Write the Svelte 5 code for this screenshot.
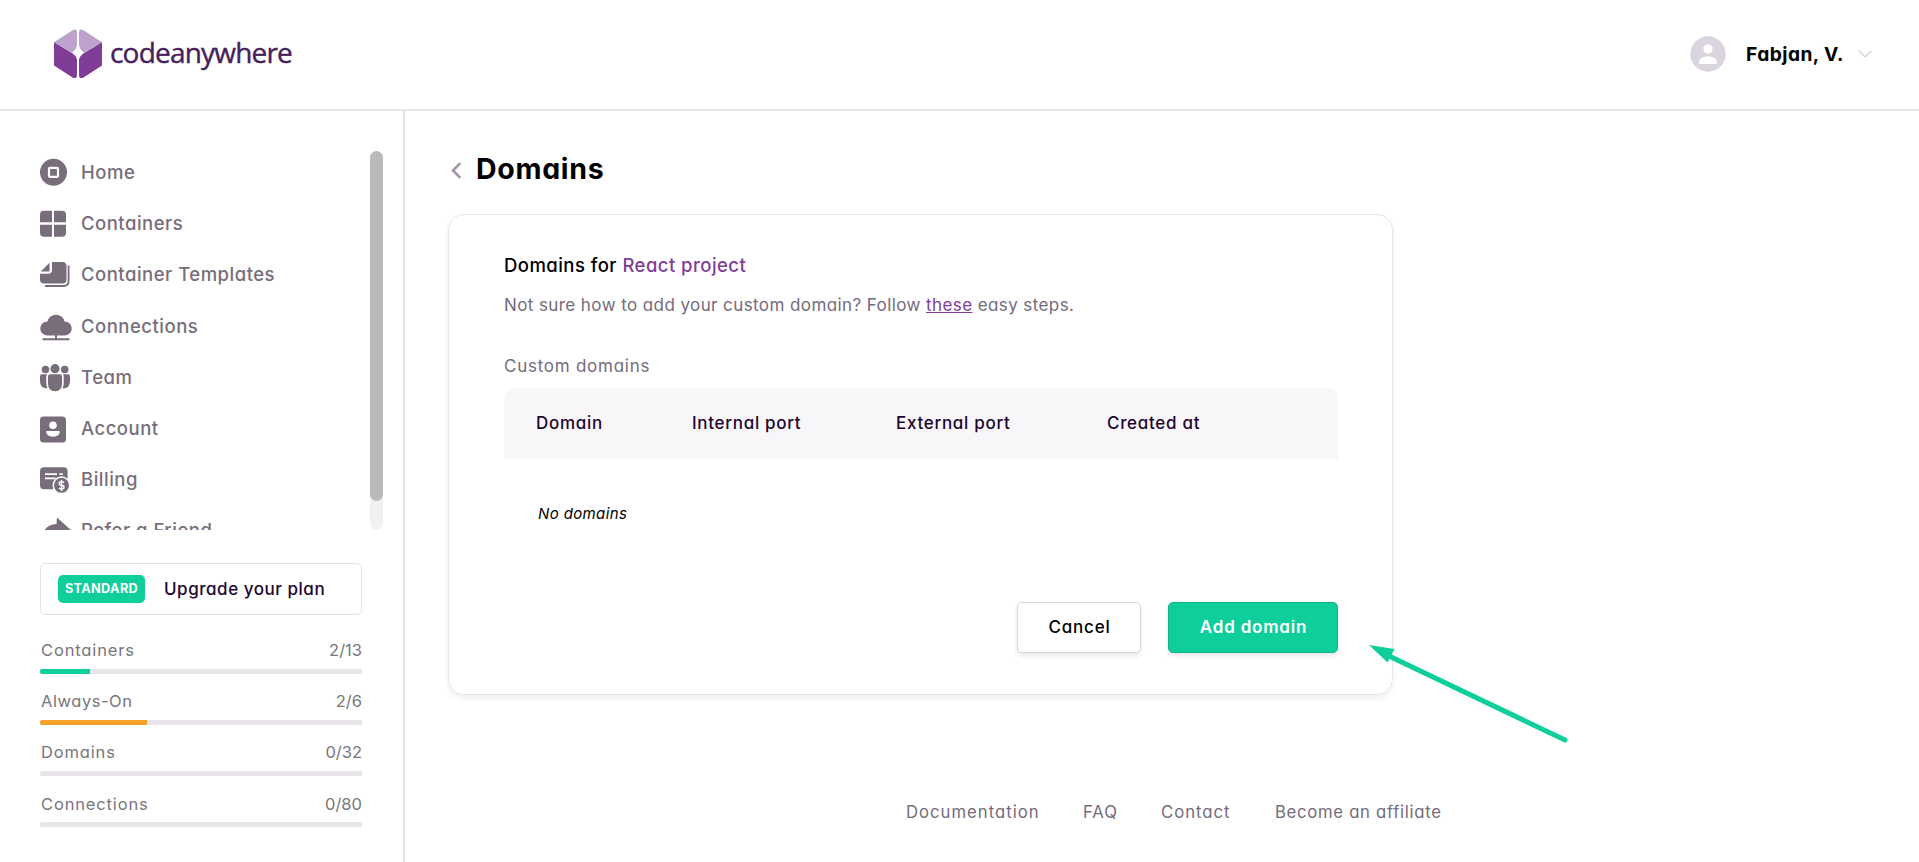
<script>
  const nav = [
    { id: 'home', label: 'Home' },
    { id: 'containers', label: 'Containers' },
    { id: 'templates', label: 'Container Templates' },
    { id: 'connections', label: 'Connections' },
    { id: 'team', label: 'Team' },
    { id: 'account', label: 'Account' },
    { id: 'billing', label: 'Billing' },
    { id: 'refer', label: 'Refer a Friend' }
  ];
  const usage = [
    { label: 'Containers', used: 2, total: 13 },
    { label: 'Always-On', used: 2, total: 6, warn: true },
    { label: 'Domains', used: 0, total: 32 },
    { label: 'Connections', used: 0, total: 80 }
  ];
  const links = ['Documentation', 'FAQ', 'Contact', 'Become an affiliate'];
</script>

<div class="page">
  <header>
    <a class="logo" href="#home" aria-label="codeanywhere">
      <svg width="48" height="50" viewBox="0 0 48 50">
        <path fill="#bca2cd" d="M0 13.2 18.5 1.2Q23 -1 23 4V15Q23 20 18 23.500Z" />
        <path fill="#bca2cd" d="M48 13.200 29.500 1.200Q25 -1 25 4V15Q25 20 30 23.500Z" />
        <path fill="#803d98" d="M0 13.200 18 24Q23 27 23 32V46Q23 50.500 18.500 48.500L0 36.500Z" />
        <path fill="#803d98" d="M48 13.200 30 24Q25 27 25 32V46Q25 50.500 29.500 48.500L48 36.500Z" />
      </svg>
      <span>codeanywhere</span>
    </a>
    <div class="user">
      <svg width="36" height="36" viewBox="0 0 36 36">
        <circle cx="18" cy="18" r="17.700" fill="#d9d4dd" />
        <circle cx="18" cy="13" r="4.600" fill="#fff" />
        <path fill="#fff" d="M9.300 28V25.500C9.300 22 14 20.600 18 20.600S26.700 22 26.700 25.500V28Z" />
      </svg>
      <span class="name">Fabjan, V.</span>
      <svg width="14" height="8" viewBox="0 0 14 8"><path d="M.7.700 7 6.800 13.300.700" fill="none" stroke="#d5d1d8" stroke-width="1.200" /></svg>
    </div>
  </header>

  <div class="body">
    <aside>
      <div class="scroller">
        <nav>
          {#each nav as item}
            <a href="#{item.id}">
              <svg width="41" height="43.200" viewBox="0 0 41 43.200" fill="#776d7b">
                {#if item.id === 'home'}
                  <circle cx="13.500" cy="21.300" r="13.500" />
                  <rect x="9" y="16.800" width="9" height="9" rx="1" fill="none" stroke="#fff" stroke-width="2.200" />
                {:else if item.id === 'containers'}
                  <path d="M4 8.800H12V20.300H0V12.800Q0 8.800 4 8.800ZM14 8.800H22Q26 8.800 26 12.800V20.300H14ZM0 22.800H12V34.800H4Q0 34.800 0 30.800ZM14 22.800H26V30.800Q26 34.800 22 34.800H14Z" />
                {:else if item.id === 'templates'}
                  <path d="M12 9H22.500Q26.500 9 26.500 13V26.500Q26.500 30.500 22.500 30.500H4Q0 30.500 0 26.500V20.800H8Q12 20.800 12 17Z" />
                  <path d="M9.500 9.800V18.500H.8Z" />
                  <path d="M28.600 12.500V28Q28.600 33 23.500 33H5" fill="none" stroke="#776d7b" stroke-width="1.800" />
                {:else if item.id === 'connections'}
                  <path d="M7 30.500A7 7 0 0 1 7.500 16.500A8.700 8.700 0 0 1 24.500 16.500A7 7 0 0 1 25 30.500Z" />
                  <path d="M15 30H17V33.200H29.500V35.200H2.500V33.200H15Z" />
                {:else if item.id === 'team'}
                  <circle cx="15" cy="12.700" r="4.600" />
                  <circle cx="5.500" cy="13.500" r="3.800" />
                  <circle cx="24.700" cy="13.500" r="3.800" />
                  <path d="M10 18.300H20Q22 18.300 22 20.300V27Q22 35.200 15 35.200T8 27V20.300Q8 18.300 10 18.300ZM2 18.300H7Q6.300 19 6.300 20.500V27Q6.300 30 7.500 32.600Q0 32.600 0 25V20.300Q0 18.300 2 18.300ZM28 18.300H23Q23.700 19 23.700 20.500V27Q23.700 30 22.500 32.600Q30 32.600 30 25V20.300Q30 18.300 28 18.300Z" />
                {:else if item.id === 'account'}
                  <rect y="9.500" width="26" height="26" rx="3.600" />
                  <circle cx="13" cy="18.200" r="3.800" fill="#fff" />
                  <path fill="#fff" d="M7 24H19Q20.400 24 19.600 26Q18 29.800 13 29.800T6.400 26Q5.600 24 7 24Z" />
                {:else if item.id === 'billing'}
                  <rect y="9.200" width="27.600" height="22" rx="4" />
                  <path d="M5 16.200H17M19.500 16.200H22.800M5 20.400H15.500" stroke="#fff" stroke-width="1.800" />
                  <circle cx="21.500" cy="27.300" r="8.300" stroke="#fff" stroke-width="1.500" />
                  <path d="M24 24.700Q23.300 23.800 21.500 23.800Q19.200 23.800 19.200 25.500Q19.200 27 21.500 27.300Q24 27.600 24 29.200Q24 31 21.500 31Q19.600 31 18.900 29.900M21.500 22V33" fill="none" stroke="#fff" stroke-width="1.400" />
                {:else}
                  <path d="M17 8.600 32 22 17 33V26Q6 25 1 33Q2 16 16.500 15Z" />
                {/if}
              </svg>
              <span>{item.label}</span>
            </a>
          {/each}
        </nav>
        <div class="track"><div class="thumb"></div></div>
      </div>

      <a class="plan" href="#plan"><b>STANDARD</b><span>Upgrade your plan</span></a>

      <div class="usage">
        {#each usage as u}
          <div class="quota">
            <div class="line"><span class="what" class:tight={u.warn}>{u.label}</span><span>{u.used}/{u.total}</span></div>
            <div class="bar"><div class:warn={u.warn} style:width="{(u.used / u.total) * 100}%"></div></div>
          </div>
        {/each}
      </div>
    </aside>

    <main>
      <div class="title">
        <svg width="11" height="17" viewBox="0 0 11 17"><path d="M9.300 1.200 2 8.500 9.300 15.800" fill="none" stroke="#a596a9" stroke-width="2.600" /></svg>
        <h1>Domains</h1>
      </div>

      <section class="card">
        <h2>Domains for <span>React project</span></h2>
        <p class="hint">Not sure how to add your custom domain? Follow <a href="#steps">these</a> easy steps.</p>
        <p class="caption">Custom domains</p>
        <div class="thead">
          <span>Domain</span><span>Internal port</span><span>External port</span><span>Created at</span>
        </div>
        <div class="empty">No domains</div>
        <div class="actions">
          <button class="cancel">Cancel</button>
          <button class="add">Add domain</button>
        </div>
        <svg class="arrow" width="200" height="100" viewBox="0 0 200 100">
          <path d="M21 11.500 196 95" stroke="#0ecf9b" stroke-width="5" stroke-linecap="round" />
          <path d="M0 0 25.500 4 18.500 17.500Z" fill="#0ecf9b" />
        </svg>
      </section>

      <footer>
        {#each links as l}<a href="#{l}">{l}</a>{/each}
      </footer>
    </main>
  </div>
</div>

<style>
  :global(body) { background: #fff; overflow: hidden; }
  .page {
    height: 862px;
    display: flex;
    flex-direction: column;
    font-family: Inter, "Liberation Sans", sans-serif;
    font-feature-settings: "cv11" 1;
    color: #000;
  }
  .page :global(*) { box-sizing: border-box; }
  a { text-decoration: none; color: inherit; }
  h1, h2, p { margin: 0; }
  svg { display: block; flex: none; }

  header {
    height: 111px;
    flex: none;
    border-bottom: 2px solid #e8e4eb;
    display: flex;
    justify-content: space-between;
    padding: 0 47px 0 54px;
  }
  .logo { display: flex; gap: 8px; padding-top: 29px; }
  .logo span {
    font: 500 28px/48px "Open Sans", sans-serif;
    letter-spacing: -.8px;
    color: #46215c;
    -webkit-text-stroke: .4px #46215c;
    margin-top: -1.500px;
  }
  .user { display: flex; align-items: center; height: 108px; }
  .name { font-size: 19.200px; font-weight: 650; letter-spacing: .450px; width: 112px; margin-left: 20px; white-space: nowrap; }

  .body { flex: 1; display: flex; min-height: 0; }
  aside { width: 405px; border-right: 2px solid #e8e4eb; padding: 40px 20px 0 40px; flex: none; }
  .scroller { height: 379px; display: flex; justify-content: space-between; overflow: hidden; }
  nav { display: flex; flex-direction: column; gap: 8px; }
  nav a {
    display: flex;
    height: 43.200px;
    flex: none;
    align-items: center;
    color: #776d7b;
    font-size: 18.500px;
    font-weight: 500;
    letter-spacing: .500px;
    line-height: 22px;
    white-space: nowrap;
  }
  nav span { margin-top: -1px; }
  .track { width: 13px; border-radius: 7px; background: #f1f1f1; }
  .thumb { height: 350px; border-radius: 7px; background: #bababa; }

  .plan {
    margin-top: 33px;
    width: 322px;
    height: 52px;
    border: 1px solid #e6e3e8;
    border-radius: 5px;
    display: flex;
    align-items: center;
    padding-left: 17px;
    color: #1c052f;
    font-size: 17px;
    font-weight: 500;
    letter-spacing: .540px;
  }
  .plan b {
    width: 87px;
    height: 28px;
    line-height: 27px;
    border-radius: 5px;
    background: #0ecf9b;
    color: #fff;
    text-align: center;
    font-size: 12.700px;
    font-weight: 700;
    letter-spacing: .350px;
    margin-right: 19px;
  }
  .usage { width: 322px; margin-top: 23px; }
  .quota { height: 51.200px; }
  .line { display: flex; justify-content: space-between; font-size: 16.500px; line-height: 24px; padding-left: 1px; color: #79757c; }
  .what { letter-spacing: .850px; }
  .what.tight { letter-spacing: .550px; }
  .bar { height: 5px; margin-top: 6.500px; background: #e8e4ea; border-radius: 2px 0 0 2px; overflow: hidden; }
  .bar div { height: 100%; background: #0ecf9b; }
  .bar .warn { background: #f5a028; }

  main { flex: 1; padding: 39px 0 0 43px; }
  .title { display: flex; align-items: center; height: 40px; padding-left: 3px; gap: 14px; }
  h1 { font-size: 28.500px; font-weight: 700; line-height: 38px; letter-spacing: .700px; margin-top: -2px; }
  .card {
    position: relative;
    margin-top: 24px;
    width: 945px;
    height: 481px;
    border: 1px solid #e8e5ea;
    border-radius: 16px;
    box-shadow: 0 3px 6px rgba(0, 0, 0, .07);
    padding: 36px 54px 0 55px;
  }
  h2 { font-size: 18.500px; font-weight: 500; line-height: 28px; letter-spacing: .460px; }
  h2 span { color: #803d98; }
  .hint { font-size: 17px; line-height: 24px; margin-top: 14px; color: #746b7b; letter-spacing: .410px; }
  .hint a { color: #803d98; text-decoration: underline; }
  .caption { font-size: 17px; line-height: 24px; margin-top: 37px; color: #746b7b; letter-spacing: .750px; }
  .thead {
    margin-top: 10px;
    height: 71px;
    border-radius: 10px 10px 0 0;
    background: #f8f6f9;
    display: grid;
    grid-template-columns: 156px 204px 211px 1fr;
    padding: 0 0 2px 32px;
    align-items: center;
    color: #1c052f;
    font-size: 17px;
    font-weight: 500;
    letter-spacing: .700px;
  }
  .empty { height: 143px; padding: 43px 0 0 34px; font-size: 15px; line-height: 24px; font-style: italic; letter-spacing: .370px; }
  .actions { display: flex; justify-content: flex-end; gap: 27px; }
  button {
    height: 51px;
    padding: 0 0 1px 1px;
    border-radius: 5px;
    font: inherit;
    font-size: 17px;
    letter-spacing: .800px;
    box-shadow: 0 3px 5px rgba(0, 0, 0, .09);
  }
  .cancel { width: 124px; border: 1px solid #d9d4dd; background: #fff; color: #000; font-weight: 500; }
  .add { width: 170px; border: 1px solid #10b388; background: #0ecf9b; color: #fff; font-weight: 600; }
  .arrow { position: absolute; left: 920px; top: 430px; overflow: visible; }

  footer {
    margin: 103px 0 0 458px;
    display: grid;
    grid-template-columns: 177px 78px 114px 1fr;
    font-size: 16.700px;
    line-height: 28px;
    letter-spacing: 1px;
    color: #746b7b;
  }
  footer a:last-child { letter-spacing: .700px; }
</style>
